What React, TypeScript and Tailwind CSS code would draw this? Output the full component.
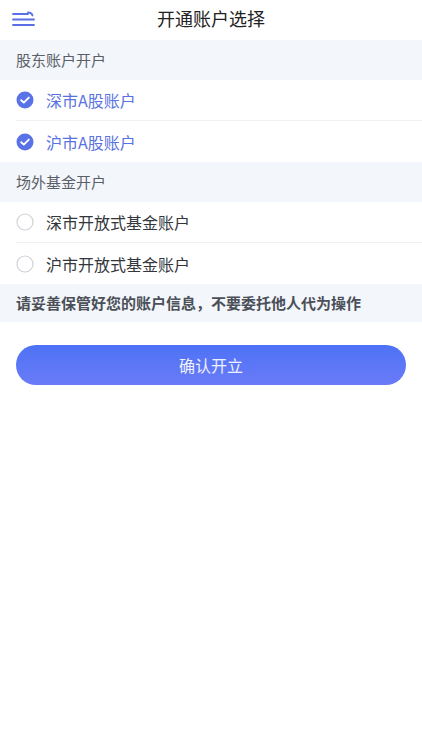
import React, { useState } from 'react';

const font = { fontFamily: '"Noto Sans CJK SC", "Noto Sans", sans-serif' };

// --- Icons ---

const MenuIcon = () => (
  <svg width="24" height="18" viewBox="0 0 24 18" fill="none" stroke="#5b70e6" strokeWidth="1.8" strokeLinecap="round">
    <path d="M1 3h15" />
    <path d="M16 1.5c2.5 0 4 1 4.5 3" />
    <path d="M1 8.5h21" />
    <path d="M1 14h21" />
  </svg>
);

const CheckCircle: React.FC<{ checked: boolean }> = ({ checked }) =>
  checked ? (
    <svg width="18" height="18" viewBox="0 0 18 18">
      <circle cx="9" cy="9" r="8.5" fill="#5a72e8" />
      <path d="M5.2 9.2l2.6 2.4 5-5" fill="none" stroke="#fff" strokeWidth="1.9" strokeLinecap="round" strokeLinejoin="round" />
    </svg>
  ) : (
    <svg width="18" height="18" viewBox="0 0 18 18">
      <circle cx="9" cy="9" r="8" fill="#fff" stroke="#cfd2d8" strokeWidth="1.2" />
    </svg>
  );

// --- Subcomponents ---

const SectionHeader: React.FC<{ title: string }> = ({ title }) => (
  <div className="h-10 bg-[#f3f6fa] flex items-center px-4 text-[15px] text-[#5a5f68]">{title}</div>
);

const OptionRow: React.FC<{ label: string; checked: boolean; divider?: boolean; onClick: () => void }> = ({
  label,
  checked,
  divider,
  onClick,
}) => (
  <div className="pl-4 bg-white" onClick={onClick}>
    <div className={`h-[41px] flex items-center gap-3 ${divider ? 'border-b border-[#eef0f3]' : ''}`}>
      <CheckCircle checked={checked} />
      <span className={`text-[16px] ${checked ? 'text-[#5a72e0]' : 'text-[#33363b]'}`}>{label}</span>
    </div>
  </div>
);

// --- Main Component ---

export default function App() {
  const [selected, setSelected] = useState<Record<string, boolean>>({
    szA: true,
    shA: true,
    szFund: false,
    shFund: false,
  });

  const toggle = (key: string) => setSelected(s => ({ ...s, [key]: !s[key] }));

  return (
    <div className="w-[422px] min-h-[750px] bg-white" style={font}>
      {/* Header */}
      <div className="h-10 flex items-center justify-between px-3">
        <button className="w-6 h-6 flex items-center justify-center">
          <MenuIcon />
        </button>
        <h1 className="text-[18px] text-[#222] -mt-1">开通账户选择</h1>
        <div className="w-6" />
      </div>

      <SectionHeader title="股东账户开户" />
      <OptionRow label="深市A股账户" checked={selected.szA} divider onClick={() => toggle('szA')} />
      <OptionRow label="沪市A股账户" checked={selected.shA} onClick={() => toggle('shA')} />

      <SectionHeader title="场外基金开户" />
      <OptionRow label="深市开放式基金账户" checked={selected.szFund} divider onClick={() => toggle('szFund')} />
      <OptionRow label="沪市开放式基金账户" checked={selected.shFund} onClick={() => toggle('shFund')} />

      <div className="h-[38px] bg-[#f3f6fa] flex items-center px-4 text-[15px] font-bold text-[#4a4f58]">
        请妥善保管好您的账户信息，不要委托他人代为操作
      </div>

      <div className="px-4 pt-[23px]">
        <button className="w-full h-10 rounded-full bg-gradient-to-b from-[#4d72f6] to-[#6a7bf7] text-white/90 text-[16px]">
          确认开立
        </button>
      </div>
    </div>
  );
}
